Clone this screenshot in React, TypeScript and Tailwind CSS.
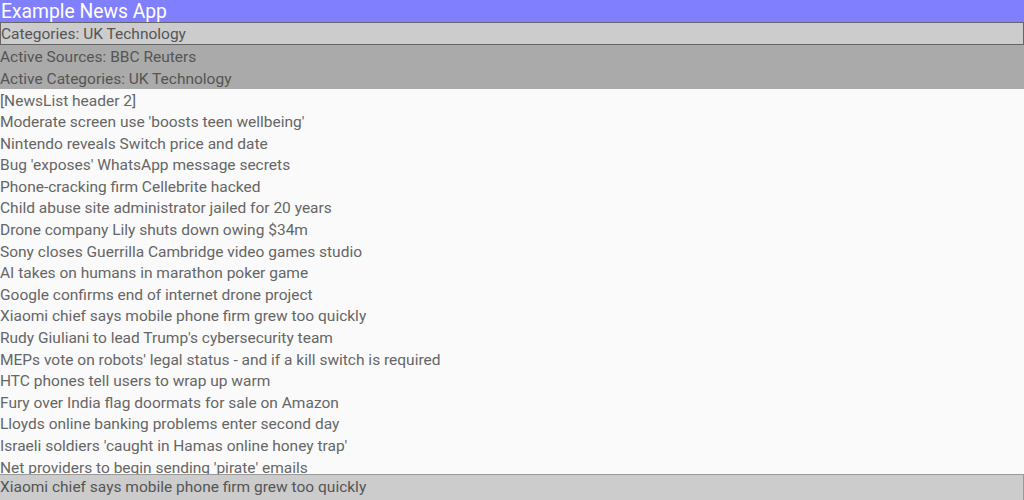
const headlines = [
  "Moderate screen use 'boosts teen wellbeing'",
  "Nintendo reveals Switch price and date",
  "Bug 'exposes' WhatsApp message secrets",
  "Phone-cracking firm Cellebrite hacked",
  "Child abuse site administrator jailed for 20 years",
  "Drone company Lily shuts down owing $34m",
  "Sony closes Guerrilla Cambridge video games studio",
  "AI takes on humans in marathon poker game",
  "Google confirms end of internet drone project",
  "Xiaomi chief says mobile phone firm grew too quickly",
  "Rudy Giuliani to lead Trump's cybersecurity team",
  "MEPs vote on robots' legal status - and if a kill switch is required",
  "HTC phones tell users to wrap up warm",
  "Fury over India flag doormats for sale on Amazon",
  "Lloyds online banking problems enter second day",
  "Israeli soldiers 'caught in Hamas online honey trap'",
  "Net providers to begin sending 'pirate' emails",
];

export default function App() {
  return (
    <div
      className="flex flex-col h-[500px] w-[1024px] overflow-hidden bg-[#fafafa] text-[#666666]"
      style={{ fontFamily: "Roboto, 'Liberation Sans', sans-serif" }}
    >
      {/* Title bar */}
      <div className="h-[22px] shrink-0 bg-[#8080ff] text-white text-[19.3px] leading-[23px] pl-[1px]">
        Example News App
      </div>

      {/* Category selector */}
      <div className="h-[23px] shrink-0 bg-[#cccccc] border border-[#666666] text-[15.5px] leading-[23px] text-[#555555]">
        Categories: UK Technology
      </div>

      {/* Active filters */}
      <div className="shrink-0 bg-[#aaaaaa] text-[15.5px] leading-[24px] text-[#555555]">
        <div className="h-[22px]">Active Sources: BBC Reuters</div>
        <div className="h-[22px]">Active Categories: UK Technology</div>
      </div>

      {/* News list */}
      <div className="flex-1 overflow-hidden pt-[1.5px] text-[15.5px] leading-[21.6px]">
        <div>[NewsList header 2]</div>
        {headlines.map((h) => (
          <div key={h}>{h}</div>
        ))}
      </div>

      {/* Selected item */}
      <div className="h-[26px] shrink-0 bg-[#cccccc] border-t border-r border-[#999999] text-[15.5px] leading-[24px] text-[#555555]">
        Xiaomi chief says mobile phone firm grew too quickly
      </div>
    </div>
  );
}
